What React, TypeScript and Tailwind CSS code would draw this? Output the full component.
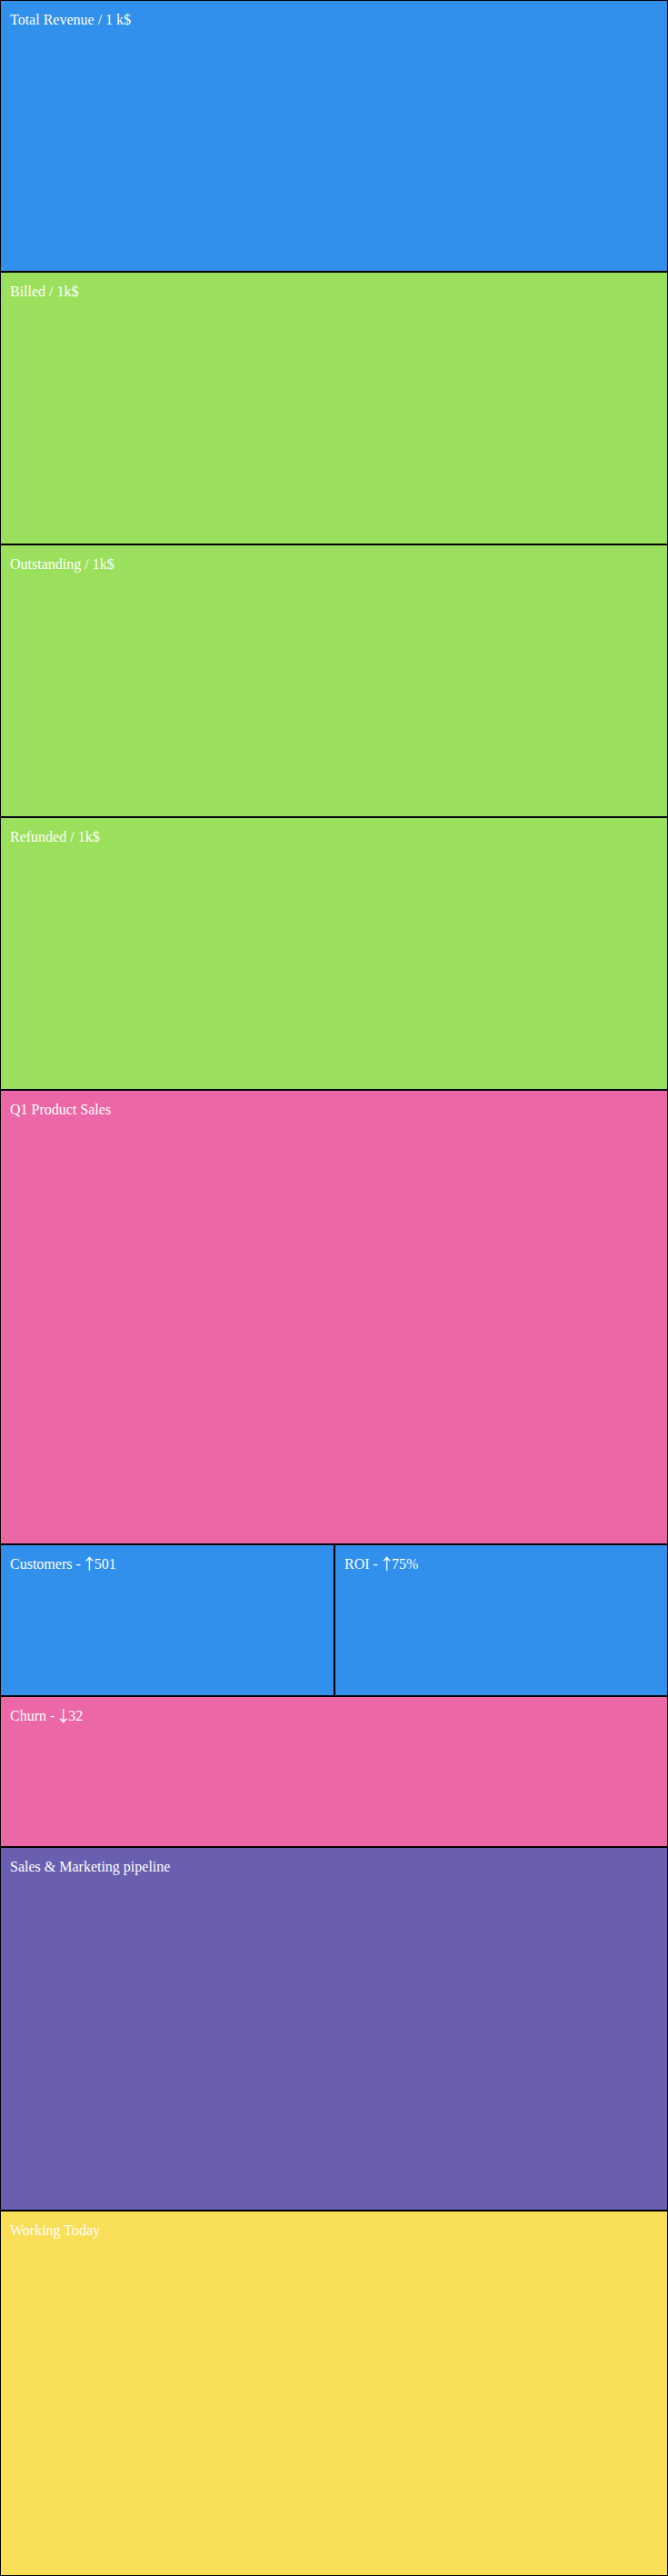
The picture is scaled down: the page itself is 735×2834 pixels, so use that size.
import React from "react";

const Arrow = ({ c }: { c: string }) => (
  <span className="font-['Noto_Sans_CJK_JP',sans-serif] text-[17px] leading-none mx-[-3px] align-[-1px]">{c}</span>
);

const box = "border border-black px-[10px] pt-[9px] text-white text-[16px]";

export default function App() {
  return (
    <div className="w-[735px] flex flex-col font-['Liberation_Serif','Times_New_Roman',serif]">
      <div className={`${box} bg-[#3090ec] h-[299px]`}>Total Revenue / 1 k$</div>
      <div className={`${box} bg-[#9be05c] h-[300px]`}>Billed / 1k$</div>
      <div className={`${box} bg-[#9be05c] h-[300px]`}>Outstanding / 1k$</div>
      <div className={`${box} bg-[#9be05c] h-[300px]`}>Refunded / 1k$</div>
      <div className={`${box} bg-[#ec67a6] h-[500px]`}>Q1 Product Sales</div>
      <div className="flex h-[167px]">
        <div className={`${box} bg-[#3090ec] w-[368px]`}>Customers - <Arrow c="↑" />501</div>
        <div className={`${box} bg-[#3090ec] flex-1`}>ROI - <Arrow c="↑" />75%</div>
      </div>
      <div className={`${box} bg-[#ec67a6] h-[166px]`}>Churn - <Arrow c="↓" />32</div>
      <div className={`${box} bg-[#695eaf] h-[400px]`}>Sales &amp; Marketing pipeline</div>
      <div className={`${box} bg-[#f9de58] h-[402px]`}>Working Today</div>
    </div>
  );
}
